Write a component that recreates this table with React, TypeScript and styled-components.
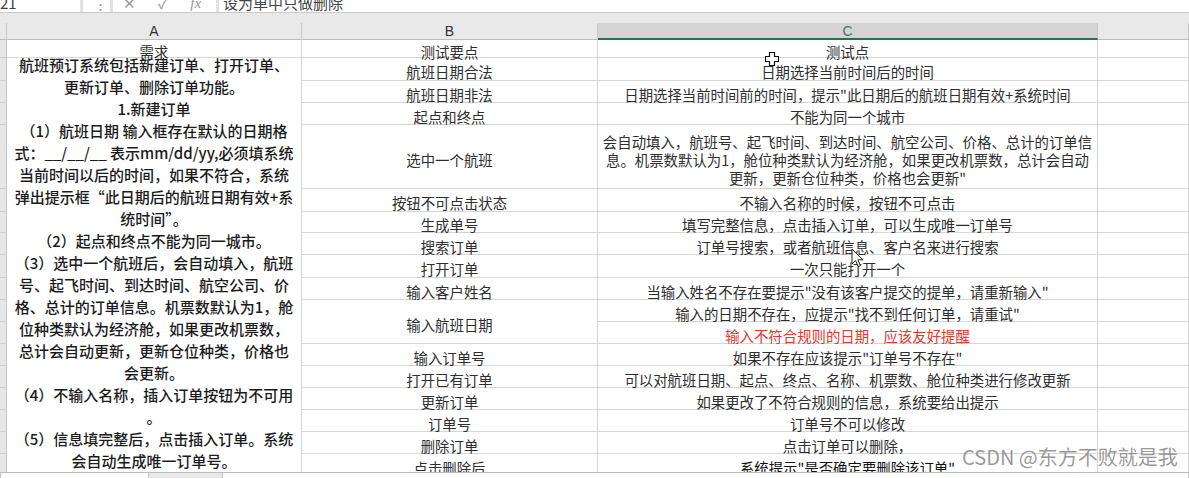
import React from 'react';
import styled, { createGlobalStyle } from 'styled-components';

const Global = createGlobalStyle`
  html, body { margin: 0; padding: 0; background: #fff; }
  body { font-family: "Noto Sans CJK SC", "Noto Sans", sans-serif; overflow: hidden; }
`;

const Page = styled.div`
  position: relative;
  width: 1189px;
  height: 478px;
  display: flex;
  flex-direction: column;
  overflow: hidden;
  background: #fff;
`;

/* ---------- formula bar (clipped at top) ---------- */
const FormulaBar = styled.div`
  flex: none;
  height: 13px;
  display: flex;
  gap: 3px;
  background: #e2e2e2;
  border-bottom: 1px solid #c9c9c9;
  box-sizing: border-box;
  overflow: hidden;
`;

const BarBox = styled.div<{ $w?: number; $pad?: number }>`
  ${(p) => (p.$w ? `width: ${p.$w}px; flex: none;` : 'flex: 1;')}
  height: 100%;
  background: #fff;
  display: flex;
  align-items: flex-start;
  gap: 22px;
  padding-left: ${(p) => p.$pad ?? 0}px;
  box-sizing: border-box;
  overflow: hidden;
`;

const BarText = styled.span<{ $muted?: boolean; $italic?: boolean }>`
  margin-top: -8px;
  font-size: 15px;
  line-height: 22px;
  white-space: nowrap;
  color: ${(p) => (p.$muted ? '#9a9a9a' : '#444')};
  ${(p) => (p.$italic ? 'font-style: italic; font-family: "Liberation Serif", serif;' : '')}
`;

/* ---------- sheet grid ---------- */
const rowHeights = [18, 23, 22, 22, 64, 23, 21, 22, 23, 22, 22, 22, 22, 22, 22, 22, 22, 22];

const Sheet = styled.div`
  flex: none;
  height: 459px;
  display: grid;
  grid-template-columns: 7px 295px 296px 500px 1fr;
  grid-template-rows: 10px 17px ${rowHeights.map((h) => `${h}px`).join(' ')};
  overflow: hidden;
`;

const Band = styled.div`
  grid-column: 1 / -1;
  grid-row: 1;
  background: #e9e9e9;
`;

const ColHead = styled.div<{ $col: number; $active?: boolean }>`
  grid-row: 2;
  grid-column: ${(p) => p.$col};
  box-sizing: border-box;
  background: ${(p) => (p.$active ? '#d4d4d4' : '#e9e9e9')};
  border-right: 1px solid #c9c9c9;
  border-bottom: ${(p) => (p.$active ? '2px solid #217346' : '1px solid #bdbdbd')};
  display: flex;
  align-items: center;
  justify-content: center;
  font-family: "Liberation Sans", Arial, sans-serif;
  font-size: 14px;
  color: ${(p) => (p.$active ? '#4a7560' : '#333')};
`;

const RowHead = styled.div<{ $row: number }>`
  grid-column: 1;
  grid-row: ${(p) => p.$row};
  box-sizing: border-box;
  background: #e6e6e6;
  border-right: 1px solid #c4c4c4;
  border-bottom: 1px solid #cdcdcd;
`;

const Cell = styled.div<{ $row: number; $col: number; $span?: number; $tone?: 'red' | 'strong' }>`
  grid-column: ${(p) => p.$col};
  grid-row: ${(p) => p.$row} / span ${(p) => p.$span ?? 1};
  box-sizing: border-box;
  min-width: 0;
  border-right: 1px solid #d6d6d6;
  border-bottom: 1px solid #d6d6d6;
  padding-top: 6px;
  display: flex;
  flex-direction: column;
  align-items: center;
  justify-content: center;
  font-size: 14.4px;
  line-height: 18px;
  white-space: nowrap;
  color: ${(p) => (p.$tone === 'red' ? '#e5362e' : p.$tone === 'strong' ? '#111' : '#2e2e2e')};
`;

const MergedA = styled.div`
  grid-column: 2;
  grid-row: 4 / span 17;
  box-sizing: border-box;
  border-right: 1px solid #d6d6d6;
  overflow: hidden;
`;

const AText = styled.div`
  margin-top: -4px;
  font-size: 15px;
  font-weight: 500;
  line-height: 22px;
  color: #1b1b1b;
  text-align: center;
  white-space: nowrap;
`;

const BottomBar = styled.div`
  flex: none;
  height: 6px;
  display: flex;
  gap: 73px;
  background: #e8e8e8;
  border-top: 1px solid #bcbcbc;
  box-sizing: border-box;
`;

const Tab = styled.div<{ $w?: number }>`
  ${(p) => (p.$w ? `width: ${p.$w}px; flex: none;` : 'flex: 1;')}
  background: #fff;
  border-left: 1px solid #c4c4c4;
  border-right: 1px solid #c4c4c4;
`;

/* ---------- overlays ---------- */
const Watermark = styled.div`
  position: absolute;
  left: 962px;
  top: 445px;
  font-family: "Noto Sans CJK SC", "Noto Sans", sans-serif;
  font-size: 20px;
  line-height: 24px;
  color: rgba(125, 125, 125, 0.78);
  white-space: nowrap;
  pointer-events: none;
`;

const CursorBox = styled.svg<{ $x: number; $y: number }>`
  position: absolute;
  left: ${(p) => p.$x}px;
  top: ${(p) => p.$y}px;
  pointer-events: none;
`;

const aLines = [
  '航班预订系统包括新建订单、打开订单、',
  '更新订单、删除订单功能。',
  '1.新建订单',
  '（1）航班日期 输入框存在默认的日期格',
  '式：__/__/__ 表示mm/dd/yy,必须填系统',
  '当前时间以后的时间，如果不符合，系统',
  '弹出提示框“此日期后的航班日期有效+系',
  '统时间”。',
  '（2）起点和终点不能为同一城市。',
  '（3）选中一个航班后，会自动填入，航班',
  '号、起飞时间、到达时间、航空公司、价',
  '格、总计的订单信息。机票数默认为1，舱',
  '位种类默认为经济舱，如果更改机票数，',
  '总计会自动更新，更新仓位种类，价格也',
  '会更新。',
  '（4）不输入名称，插入订单按钮为不可用',
  '。',
  '（5）信息填完整后，点击插入订单。系统',
  '会自动生成唯一订单号。',
];

type Row = { b: string | null; bSpan?: number; c: string[]; tone?: 'red' | 'strong' };

const rows: Row[] = [
  { b: '测试要点', c: ['测试点'] },
  { b: '航班日期合法', c: ['日期选择当前时间后的时间'] },
  { b: '航班日期非法', c: ['日期选择当前时间前的时间，提示"此日期后的航班日期有效+系统时间'] },
  { b: '起点和终点', c: ['不能为同一个城市'] },
  {
    b: '选中一个航班',
    c: [
      '会自动填入，航班号、起飞时间、到达时间、航空公司、价格、总计的订单信',
      '息。机票数默认为1，舱位种类默认为经济舱，如果更改机票数，总计会自动',
      '更新，更新仓位种类，价格也会更新"',
    ],
  },
  { b: '按钮不可点击状态', c: ['不输入名称的时候，按钮不可点击'] },
  { b: '生成单号', c: ['填写完整信息，点击插入订单，可以生成唯一订单号'] },
  { b: '搜索订单', c: ['订单号搜索，或者航班信息、客户名来进行搜索'] },
  { b: '打开订单', c: ['一次只能打开一个'] },
  { b: '输入客户姓名', c: ['当输入姓名不存在要提示"没有该客户提交的提单，请重新输入"'] },
  { b: '输入航班日期', bSpan: 2, c: ['输入的日期不存在，应提示"找不到任何订单，请重试"'] },
  { b: null, c: ['输入不符合规则的日期，应该友好提醒'], tone: 'red' },
  { b: '输入订单号', c: ['如果不存在应该提示"订单号不存在"'] },
  { b: '打开已有订单', c: ['可以对航班日期、起点、终点、名称、机票数、舱位种类进行修改更新'] },
  { b: '更新订单', c: ['如果更改了不符合规则的信息，系统要给出提示'] },
  { b: '订单号', c: ['订单号不可以修改'] },
  { b: '删除订单', c: ['点击订单可以删除，'] },
  { b: '点击删除后', c: ['系统提示"是否确定要删除该订单"'], tone: 'strong' },
];

export default function App() {
  return (
    <Page>
      <Global />
      <FormulaBar>
        <BarBox $w={80}>
          <BarText>21</BarText>
        </BarBox>
        <BarBox $w={27} $pad={10}>
          <BarText $muted>⋮</BarText>
        </BarBox>
        <BarBox $w={103} $pad={10}>
          <BarText $muted>✕</BarText>
          <BarText $muted>✓</BarText>
          <BarText $muted $italic>fx</BarText>
        </BarBox>
        <BarBox $pad={4}>
          <BarText>设为单中只做删除</BarText>
        </BarBox>
      </FormulaBar>

      <Sheet>
        <Band />
        <ColHead $col={1} />
        <ColHead $col={2}>A</ColHead>
        <ColHead $col={3}>B</ColHead>
        <ColHead $col={4} $active>C</ColHead>
        <ColHead $col={5} />

        {rows.map((r, i) => {
          const gr = i + 3;
          return (
            <React.Fragment key={i}>
              <RowHead $row={gr} />
              {i === 0 && (
                <Cell $row={gr} $col={2}>需求</Cell>
              )}
              {r.b !== null && (
                <Cell $row={gr} $col={3} $span={r.bSpan}>{r.b}</Cell>
              )}
              <Cell $row={gr} $col={4} $tone={r.tone}>
                {r.c.map((line, j) => (
                  <span key={j}>{line}</span>
                ))}
              </Cell>
              <Cell $row={gr} $col={5} />
            </React.Fragment>
          );
        })}

        <MergedA>
          <AText>
            {aLines.map((l, i) => (
              <div key={i}>{l}</div>
            ))}
          </AText>
        </MergedA>
      </Sheet>

      <BottomBar>
        <Tab $w={147} />
        <Tab />
      </BottomBar>

      <CursorBox $x={765} $y={52} width="14" height="14" viewBox="0 0 14 14">
        <path d="M4.5 0.5h5v4h4v5h-4v4h-5v-4h-4v-5h4z" fill="#fff" stroke="#111" strokeWidth="1.2" />
      </CursorBox>
      <CursorBox $x={851} $y={248} width="13" height="20" viewBox="0 0 13 20">
        <path d="M1 1v15l3.6-3.4 2.6 6 2.2-1-2.6-5.8H12z" fill="#fff" stroke="#222" strokeWidth="1" />
      </CursorBox>

      <Watermark>CSDN @东方不败就是我</Watermark>
    </Page>
  );
}
